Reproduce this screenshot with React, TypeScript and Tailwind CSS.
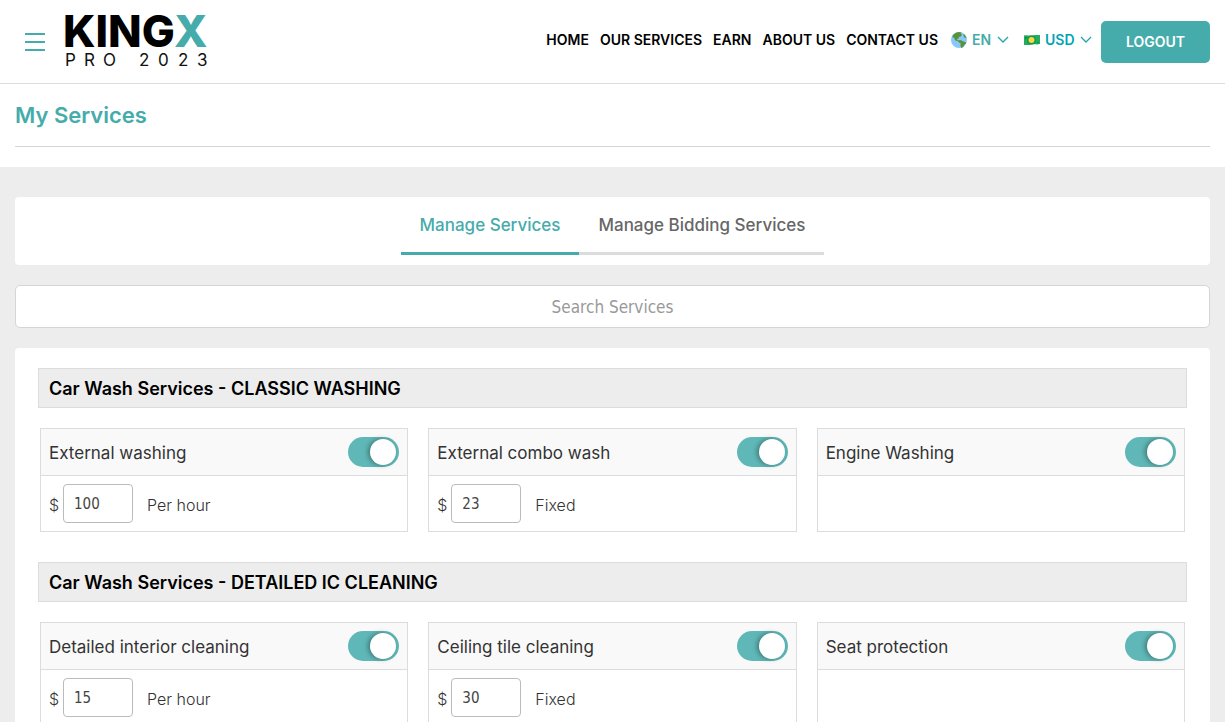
import { useState } from 'react';

interface Service {
  id: string;
  name: string;
  price?: string;
  unit?: string;
}

interface ServiceGroup {
  title: string;
  services: Service[];
}

const navLinks = ['Home', 'Our Services', 'Earn', 'About Us', 'Contact Us'];

const groups: ServiceGroup[] = [
  {
    title: 'Car Wash Services - CLASSIC WASHING',
    services: [
      { id: 'external', name: 'External washing', price: '100', unit: 'Per hour' },
      { id: 'combo', name: 'External combo wash', price: '23', unit: 'Fixed' },
      { id: 'engine', name: 'Engine Washing' },
    ],
  },
  {
    title: 'Car Wash Services - DETAILED IC CLEANING',
    services: [
      { id: 'interior', name: 'Detailed interior cleaning', price: '15', unit: 'Per hour' },
      { id: 'ceiling', name: 'Ceiling tile cleaning', price: '30', unit: 'Fixed' },
      { id: 'seat', name: 'Seat protection' },
    ],
  },
];

function Logo() {
  return (
    <svg width="152" height="76" viewBox="0 0 152 76" role="img" aria-label="KingX Pro 2023">
      <text x="2" y="43" fontFamily="Inter, sans-serif" fontSize="44" fontWeight="800" fill="#000">
        KING<tspan fill="#45acab">X</tspan>
      </text>
      <text x="4 23 42 78 97 117 136" y="62" fontFamily="Inter, sans-serif" fontSize="17" fill="#111">
        PRO2023
      </text>
    </svg>
  );
}

function GlobeIcon() {
  return (
    <svg width="16" height="16" viewBox="0 0 36 36" aria-hidden="true">
      <circle cx="18" cy="18" r="18" fill="#88c9f9" />
      <path
        fill="#5c913b"
        d="M4 8C7 4 11 1 17 0l7 1-2 3 3 2-3 4-4 1-1 4-4 1 3 3-3 2-4-3-2-5-4-1zM28 4l4 4 3 6-4-1-3-4zM15 19l6-1 6 3 6 2 1 3-5 4-1 4-5 2-2-6 1-4-6-4z"
      />
    </svg>
  );
}

function CashIcon() {
  return (
    <svg width="16" height="10" viewBox="0 0 32 20" aria-hidden="true">
      <path fill="#1fae5c" d="M0 1C6-1 10 2 16 1s11-2 16-1v18c-6 2-10 0-16 1s-11 2-16 1z" />
      <path fill="#087b39" d="M2 5l5-1-5 5zM30 13l-5 3 5-1z" />
      <circle cx="15" cy="10" r="9" fill="#12974c" />
      <circle cx="15" cy="10" r="6" fill="#fcd53f" />
    </svg>
  );
}

function Chevron() {
  return (
    <svg
      className="pointer-events-none absolute top-1.5 right-0"
      width="12"
      height="8"
      viewBox="0 0 12 8"
      fill="none"
      stroke="#21a5af"
      strokeWidth="1.3"
      aria-hidden="true"
    >
      <path d="M1 1l5 5 5-5" />
    </svg>
  );
}

function ServiceCard({ service }: { service: Service }) {
  const [enabled, setEnabled] = useState(true);
  const [price, setPrice] = useState(service.price ?? '');

  return (
    <div className="border border-[#dcdcdc]">
      <div className="flex h-[47px] items-center justify-between border-b border-[#dcdcdc] bg-[#f9f9f9] px-2">
        <label htmlFor={service.id} className="pt-[3px] text-[17px] text-[#333]">
          {service.name}
        </label>
        <input
          id={service.id}
          type="checkbox"
          checked={enabled}
          onChange={(e) => setEnabled(e.target.checked)}
          className="flex h-[30px] w-[51px] cursor-pointer appearance-none items-center rounded-full bg-gray-300 px-[3px] before:size-[26px] before:rounded-full before:bg-white before:shadow-[-2px_0_5px_rgba(0,0,0,0.35)] checked:justify-end checked:bg-[#5fb8b7]"
        />
      </div>
      <div className="flex h-[55px] items-center px-2 text-base font-light text-[#333]">
        {service.price && (
          <>
            <label htmlFor={`${service.id}-price`} className="w-[14px] pt-[3px]">
              $
            </label>
            <input
              id={`${service.id}-price`}
              type="text"
              value={price}
              onChange={(e) => setPrice(e.target.value)}
              className="h-[39px] w-[70px] rounded border border-[#bbb] bg-white px-[10px] font-['DejaVu_Sans_Condensed','Noto_Sans',sans-serif] text-[15px] font-normal text-[#444]"
            />
            <span className="ml-[14px] pt-[3px]">{service.unit}</span>
          </>
        )}
      </div>
    </div>
  );
}

export default function App() {
  const [tab, setTab] = useState(0);
  const tabs = ['Manage Services', 'Manage Bidding Services'];

  return (
    <div className="min-h-screen bg-[#ededed] font-[Inter,sans-serif]">
      <header className="flex h-[84px] items-center border-b border-[#dcdcdc] bg-white px-[15px]">
        <button type="button" aria-label="Menu" className="ml-[10px] flex w-5 flex-col gap-[6px]">
          <span className="h-[2px] bg-[#45acab]" />
          <span className="h-[2px] bg-[#45acab]" />
          <span className="h-[2px] bg-[#45acab]" />
        </button>
        <a href="#" className="ml-4">
          <Logo />
        </a>

        <div className="ml-auto flex items-center text-sm font-semibold">
          <div className="flex items-center pb-[3px]">
            <nav className="flex gap-[11px] pr-[13px] uppercase text-black">
              {navLinks.map((link) => (
                <a key={link} href="#">
                  {link}
                </a>
              ))}
            </nav>
            <div className="flex items-center gap-[5px]">
              <GlobeIcon />
              <div className="relative flex">
                <select aria-label="Language" className="w-[37px] appearance-none text-[#45acab]">
                  <option>EN</option>
                </select>
                <Chevron />
              </div>
            </div>
            <div className="ml-[15px] flex items-center gap-[5px]">
              <CashIcon />
              <div className="relative flex">
                <select aria-label="Currency" className="w-[47px] appearance-none text-[#00a5b5]">
                  <option>USD</option>
                </select>
                <Chevron />
              </div>
            </div>
          </div>
          <button type="button" className="ml-[9px] h-[42px] w-[109px] rounded-[5px] bg-[#45acab] text-white">
            LOGOUT
          </button>
        </div>
      </header>

      <div className="bg-white px-[15px] pb-5">
        <h1 className="border-b border-[#d5d5d5] py-4 text-[22px] leading-[30px] font-semibold text-[#45acab]">
          My Services
        </h1>
      </div>

      <main className="px-[15px] pt-[30px]">
        <div className="flex h-[68px] justify-center rounded bg-white pb-[10px]">
          {tabs.map((label, i) => (
            <button
              key={label}
              type="button"
              onClick={() => setTab(i)}
              className={`border-b-[3px] px-[19px] pt-[2px] text-[17px] font-medium ${
                tab === i ? 'border-[#45acab] text-[#45acab]' : 'border-[#dcdcdc] text-[#666]'
              }`}
            >
              {label}
            </button>
          ))}
        </div>

        <input
          type="text"
          aria-label="Search Services"
          placeholder="Search Services"
          className="mt-5 block h-[43px] w-full rounded-[5px] border border-[#d5d5d5] bg-white text-center font-['DejaVu_Sans_Condensed','Noto_Sans',sans-serif] text-[17px] placeholder:text-[#999]"
        />

        <div className="mt-5 rounded bg-white px-[23px] py-5">
          {groups.map((group) => (
            <section key={group.title} className="mb-[30px]">
              <h2 className="flex h-10 items-center border border-[#dcdcdc] bg-[#ededed] px-[10px] pt-[2px] text-lg font-semibold text-black">
                {group.title}
              </h2>
              <div className="mt-5 grid grid-cols-3 gap-5 px-[2px]">
                {group.services.map((service) => (
                  <ServiceCard key={service.id} service={service} />
                ))}
              </div>
            </section>
          ))}
        </div>
      </main>
    </div>
  );
}
